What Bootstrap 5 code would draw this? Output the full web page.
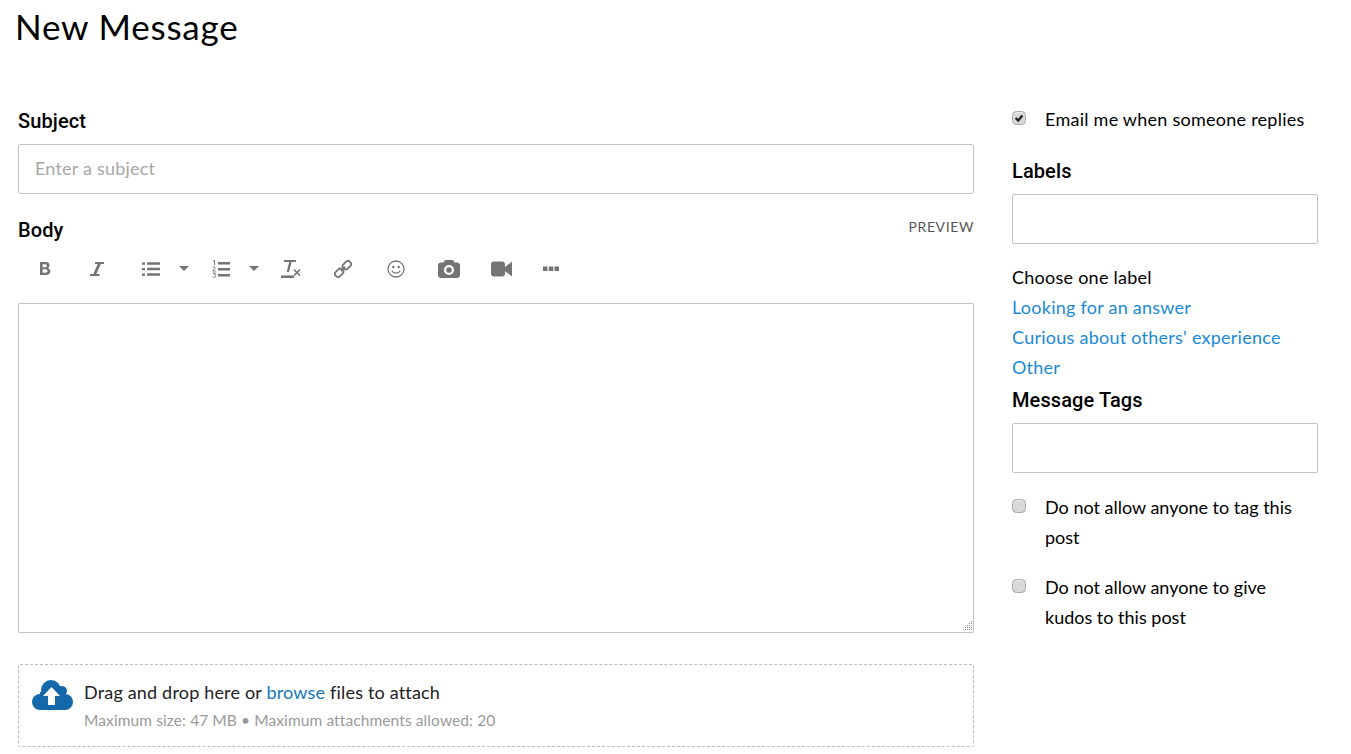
<!DOCTYPE html>
<html lang="en">
<head>
<meta charset="utf-8">
<title>New Message</title>
<link href="https://cdn.jsdelivr.net/npm/bootstrap@5.3.0/dist/css/bootstrap.min.css" rel="stylesheet">
<style>
html,body{height:754px;overflow:hidden}
body{font-family:"Lato","Liberation Sans",sans-serif;font-size:18px;line-height:30px;color:#000;background:#fff;letter-spacing:.25px}
.pg-title{font-size:35px;line-height:40px;font-weight:400;margin:6px 0 0 15px;letter-spacing:.8px}
.pg-wrap{margin:60px 0 0 18px;gap:38px}
.pg-main{width:956px}
.pg-side{width:306px}
.fld-label{font-size:20px;line-height:30px;font-weight:500;margin:0;color:#000;font-family:"Roboto","Liberation Sans",sans-serif;letter-spacing:.1px}
.fld-input{height:50px;border:1px solid #c4c4c4;border-radius:2px;font-size:18px;padding:0 16px 2px;color:#000;font-family:inherit;letter-spacing:.2px;box-shadow:none}
.fld-input::placeholder{color:#a9a7a7}
.body-head{margin-top:21px}
.preview-link{font-size:14px;letter-spacing:.6px;color:#555;text-decoration:none;line-height:24px}
.tb-row{height:46px;padding:2px 0 0 12px}
.tb-btn{width:30px;height:30px;padding:0;border:0;background:none;display:flex;align-items:center;justify-content:center;flex:none;margin-right:22px}
.tb-btn svg{display:block;fill:#747474}
.tb-gap-i{margin-right:24px}
.tb-list{margin-right:2px}
.tb-caret{width:10px}
.tb-caret-a{margin:0 18px 0 11px}
.tb-num{margin:0 1px 0 -1px}
.tb-caret-b{margin:0 18px 0 12px}
.tb-tx{margin-left:-1px}
.tb-link{margin-right:23px}
.tb-emoji{margin-right:23px}
.tb-cam{margin-right:22px}
.tb-vid{margin-right:20px}
.edit-area{height:330px;border:1px solid #c4c4c4;border-radius:2px;position:relative;margin-top:12px;background:#fff}
.grip{position:absolute;right:0;bottom:0}
.drop-box{margin-top:31px;height:83px;border:1px dashed #bdbdbd;border-radius:2px;padding:13px}
.drop-ico{flex:none;margin:2px 11px 0 0}
.drop-main{font-size:18px;line-height:28px;color:#222;letter-spacing:.18px}
.drop-sub{font-size:15.5px;line-height:28px;color:#9a9a9a;letter-spacing:.1px}
.drop-link{color:#1376bd;text-decoration:none}
.lbl-link{color:#1a8ad6;text-decoration:none}
.chk-row{display:flex;align-items:flex-start}
.chk-box{width:14px;height:14px;margin:7px 19px 0 0;flex:none;background-color:#d9d9d9;border:1px solid #a8a8a8;border-radius:3px;box-shadow:inset 0 1px 1px #eee}
.chk-box:checked{background-color:#d9d9d9;border-color:#a8a8a8;background-image:url("data:image/svg+xml,%3csvg xmlns='http://www.w3.org/2000/svg' viewBox='0 0 14 14'%3e%3cpath fill='none' stroke='%23222' stroke-width='2.6' d='M3 7l3 3 5-6'/%3e%3c/svg%3e")}
.chk-box:focus{box-shadow:none;border-color:#a8a8a8}
.side-top{margin-top:-2px}
.side-lbl{margin-top:22px}
.side-gap{margin-top:18px}
.tag-lbl{margin-top:3px}
.side-input{margin-top:8px}
.side-note{margin-top:19px;letter-spacing:0;padding-right:10px}
.side-note2{margin-top:20px;letter-spacing:0;padding-right:10px}
</style>
</head>
<body>
<h1 class="pg-title">New Message</h1>
<div class="d-flex pg-wrap">
  <main class="pg-main">
    <label class="fld-label d-block" for="subj">Subject</label>
    <input id="subj" class="form-control fld-input mt-2" placeholder="Enter a subject">
    <div class="d-flex justify-content-between align-items-start body-head">
      <div class="fld-label">Body</div>
      <a class="preview-link" href="#">PREVIEW</a>
    </div>
    <div class="tb-row d-flex align-items-center">
      <button class="tb-btn" aria-label="Bold"><svg width="14" height="16" viewBox="0 0 14 16"><path fill-rule="evenodd" d="M2 1h5.600c2.500 0 4 1.200 4 3.200 0 1.300-.7 2.300-1.800 2.800 1.500.4 2.500 1.600 2.500 3.200 0 2.400-1.700 3.800-4.500 3.800H2zm2.600 2.200v3h2.500c1.100 0 1.800-.6 1.800-1.500s-.7-1.500-1.800-1.500zm0 5.100v3.500h3c1.200 0 1.900-.7 1.900-1.750s-.7-1.750-1.900-1.750z"/></svg></button>
      <button class="tb-btn tb-gap-i" aria-label="Italic"><svg width="16" height="16" viewBox="0 0 16 16"><path d="M6 1h9v2h-3.200L7.400 13h3.100v2H1v-2h3.300L8.700 3H6z"/></svg></button>
      <button class="tb-btn tb-list" aria-label="Bullets"><svg width="18" height="16" viewBox="0 0 18 16"><path d="M0 1.500h3v2.200H0zM0 7h3v2.200H0zM0 12.500h3v2.200H0zM5 1.300h13v2.500H5zM5 6.800h13v2.500H5zM5 12.300h13v2.500H5z"/></svg></button>
      <button class="tb-btn tb-caret tb-caret-a" aria-label="Bullet styles"><svg width="10" height="6" viewBox="0 0 10 6"><path d="M0 0h10L5 5z"/></svg></button>
      <button class="tb-btn tb-num" aria-label="Numbers"><svg width="18" height="18" viewBox="0 0 18 18"><path d="M6 2h12v2.500H6zM6 8h12v2.500H6zM6 14h12v2.500H6z"/><path fill="none" stroke="#747474" d="M1 1l1.500-.5V5M.6 7.500c1-1 3-.6 2.600.7L.7 11h3M.8 13h2.700l-1.200 1.500c2 0 2 2.800-.2 2.800-.6 0-1.200-.1-1.500-.4"/></svg></button>
      <button class="tb-btn tb-caret tb-caret-b" aria-label="Number styles"><svg width="10" height="6" viewBox="0 0 10 6"><path d="M0 0h10L5 5z"/></svg></button>
      <button class="tb-btn tb-tx" aria-label="Clear formatting"><svg width="20" height="18" viewBox="0 0 20 18"><path d="M3 0h12v2h-4.500L8 12H5.700L8.200 2H3zM0 15.500h13V18H0z"/><path fill="none" stroke="#747474" stroke-width="1.600" d="M13 9.500l6 6M19 9.500l-6 6"/></svg></button>
      <button class="tb-btn tb-link" aria-label="Link"><svg width="18" height="18" viewBox="0 0 18 18"><g fill="none" stroke="#747474" stroke-width="1.800" transform="rotate(-45 9 9)"><rect x="-1" y="6" width="9" height="6" rx="2.500"/><rect x="10" y="6" width="9" height="6" rx="2.500"/><path d="M6 9h6"/></g></svg></button>
      <button class="tb-btn tb-emoji" aria-label="Emoji"><svg width="18" height="18" viewBox="0 0 18 18"><circle cx="9" cy="9" r="8" fill="none" stroke="#747474" stroke-width="1.300"/><circle cx="6.300" cy="7" r="1.200"/><circle cx="11.700" cy="7" r="1.200"/><path fill="none" stroke="#747474" stroke-width="1.300" d="M4.800 10.800c1.500 3 6.900 3 8.400 0"/></svg></button>
      <button class="tb-btn tb-cam" aria-label="Photo"><svg width="22" height="18" viewBox="0 0 22 18"><path fill-rule="evenodd" d="M7 0h8l1.500 2.500H19c1.600 0 3 1 3 3V15c0 1.800-1.400 3-3 3H3c-1.600 0-3-1.200-3-3V5.500c0-2 1.400-3 3-3h2.500zm4 5a5 5 0 1 0 0 10 5 5 0 0 0 0-10zm0 2.200a2.800 2.800 0 1 1 0 5.600 2.800 2.800 0 0 1 0-5.600z"/></svg></button>
      <button class="tb-btn tb-vid" aria-label="Video"><svg width="21" height="16" viewBox="0 0 21 16"><rect width="14" height="15" y=".5" rx="3"/><path d="M14 6l7-5.500v15L14 10z"/></svg></button>
      <button class="tb-btn" aria-label="More"><svg width="16" height="6" viewBox="0 0 16 6"><path d="M0 .5h4.500V5H0zM5.800.5h4.500V5H5.800zM11.500.5H16V5h-4.500z"/></svg></button>
    </div>
    <div class="edit-area">
      <svg class="grip" width="12" height="12" viewBox="0 0 12 12"><path fill="#8a8a9a" d="M10 1h1v1h-1zM10 3h1v1h-1zM8 3h1v1H8zM10 5h1v1h-1zM8 5h1v1H8zM6 5h1v1H6zM10 7h1v1h-1zM8 7h1v1H8zM6 7h1v1H6zM4 7h1v1H4zM10 9h1v1h-1zM8 9h1v1H8zM6 9h1v1H6zM4 9h1v1H4zM2 9h1v1H2z"/></svg>
    </div>
    <div class="drop-box d-flex">
      <svg class="drop-ico" width="41" height="30" viewBox="0 0 41 30"><g fill="#1569ab"><circle cx="8" cy="22" r="8"/><circle cx="19" cy="10" r="10"/><circle cx="30" cy="11" r="5"/><circle cx="33" cy="22" r="8"/><path d="M8 12h25v18H8z"/></g><path fill="#fff" d="M19.500 7L28 16h-5v9h-7v-9h-5z"/></svg>
      <div>
        <div class="drop-main">Drag and drop here or <a class="drop-link" href="#">browse</a> files to attach</div>
        <div class="drop-sub">Maximum size: 47 MB • Maximum attachments allowed: 20</div>
      </div>
    </div>
  </main>
  <aside class="pg-side">
    <div class="chk-row side-top"><input type="checkbox" class="form-check-input chk-box" id="c1" checked><label for="c1">Email me when someone replies</label></div>
    <label class="fld-label d-block side-lbl" for="lab">Labels</label>
    <input id="lab" class="form-control fld-input side-input">
    <div class="side-gap">Choose one label</div>
    <div><a class="lbl-link" href="#">Looking for an answer</a></div>
    <div><a class="lbl-link" href="#">Curious about others' experience</a></div>
    <div><a class="lbl-link" href="#">Other</a></div>
    <label class="fld-label d-block tag-lbl" for="tags">Message Tags</label>
    <input id="tags" class="form-control fld-input side-input">
    <div class="chk-row side-note"><input type="checkbox" class="form-check-input chk-box" id="c2"><label for="c2">Do not allow anyone to tag this post</label></div>
    <div class="chk-row side-note2"><input type="checkbox" class="form-check-input chk-box" id="c3"><label for="c3">Do not allow anyone to give kudos to this post</label></div>
  </aside>
</div>
<script src="https://cdn.jsdelivr.net/npm/bootstrap@5.3.0/dist/js/bootstrap.bundle.min.js"></script>
</body>
</html>
